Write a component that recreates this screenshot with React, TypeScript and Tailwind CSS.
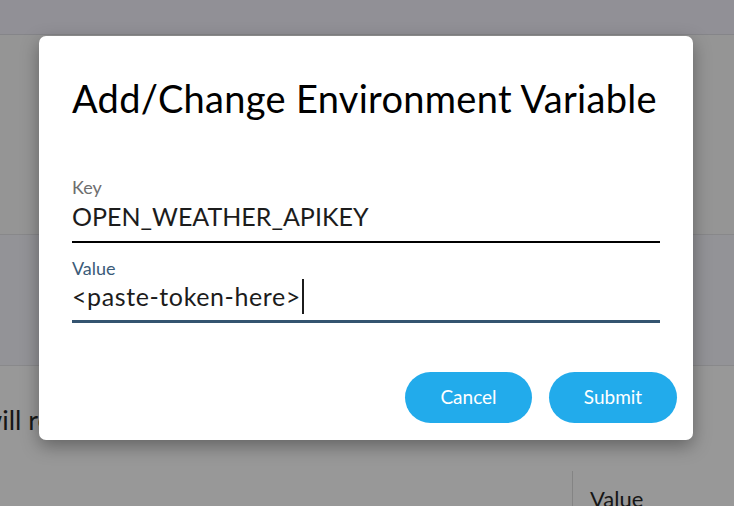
export default function App() {
  return (
    <div className="relative h-[506px] w-[734px] overflow-hidden bg-[#989898] font-['Lato',sans-serif]">
      {/* page behind the dimmed overlay */}
      <div className="flex h-full flex-col">
        <div className="h-[35px] shrink-0 border-b border-[#858589] bg-[#919096]" />
        <div className="h-[200px] shrink-0 border-b border-[#88888a] bg-[#959595]" />
        <div className="h-[131px] shrink-0 border-b border-[#89898b] bg-[#939397]" />
        <div className="mt-[38px] shrink-0 whitespace-nowrap text-[27px] leading-[32px] text-[#161616]">
          <span className="-ml-[19px]">will reload the app</span>
        </div>
        <div className="mt-[35px] flex shrink-0">
          <div className="w-[572px]" />
          <div className="h-[60px] border-l border-[#848484] pl-[17px] pt-[14px] text-[22px] leading-[28px] text-[#161616]">Value</div>
        </div>
      </div>

      {/* modal */}
      <div className="absolute left-[39px] top-[36px] flex h-[404px] w-[654px] flex-col rounded-[7px] bg-white px-[33px] shadow-[0_6px_18px_rgba(0,0,0,0.35)]">
        <h2 className="mt-[39px] whitespace-nowrap text-[38px] leading-[46px] tracking-[0.3px] text-black">Add/Change Environment Variable</h2>

        <div className="mt-[55px] border-b-2 border-black pb-[10px]">
          <div className="text-[18px] leading-[22px] text-[#6e6e6e]">Key</div>
          <div className="mt-[3px] text-[25px] leading-[30px] text-[#1c1c1c]">OPEN_WEATHER_APIKEY</div>
        </div>

        <div className="mt-[14px] border-b-[3px] border-[#345470] pb-[9px]">
          <div className="text-[18px] leading-[22px] text-[#3b5b78]">Value</div>
          <div className="mt-[2px] flex h-[30px] items-center text-[25px] leading-[30px] text-[#1c1c1c]">
            <span className="tracking-[0.6px]">&lt;paste-token-here&gt;</span>
            <span className="ml-[1px] h-[35px] w-[2px] shrink-0 bg-[#1c1c1c]" />
          </div>
        </div>

        <div className="mt-[49px] -mr-[17px] flex justify-end gap-[17px]">
          <button className="h-[51px] w-[127px] rounded-full bg-[#22abeb] text-[19px] text-white">Cancel</button>
          <button className="h-[51px] w-[128px] rounded-full bg-[#22abeb] text-[19px] text-white">Submit</button>
        </div>
      </div>
    </div>
  );
}
